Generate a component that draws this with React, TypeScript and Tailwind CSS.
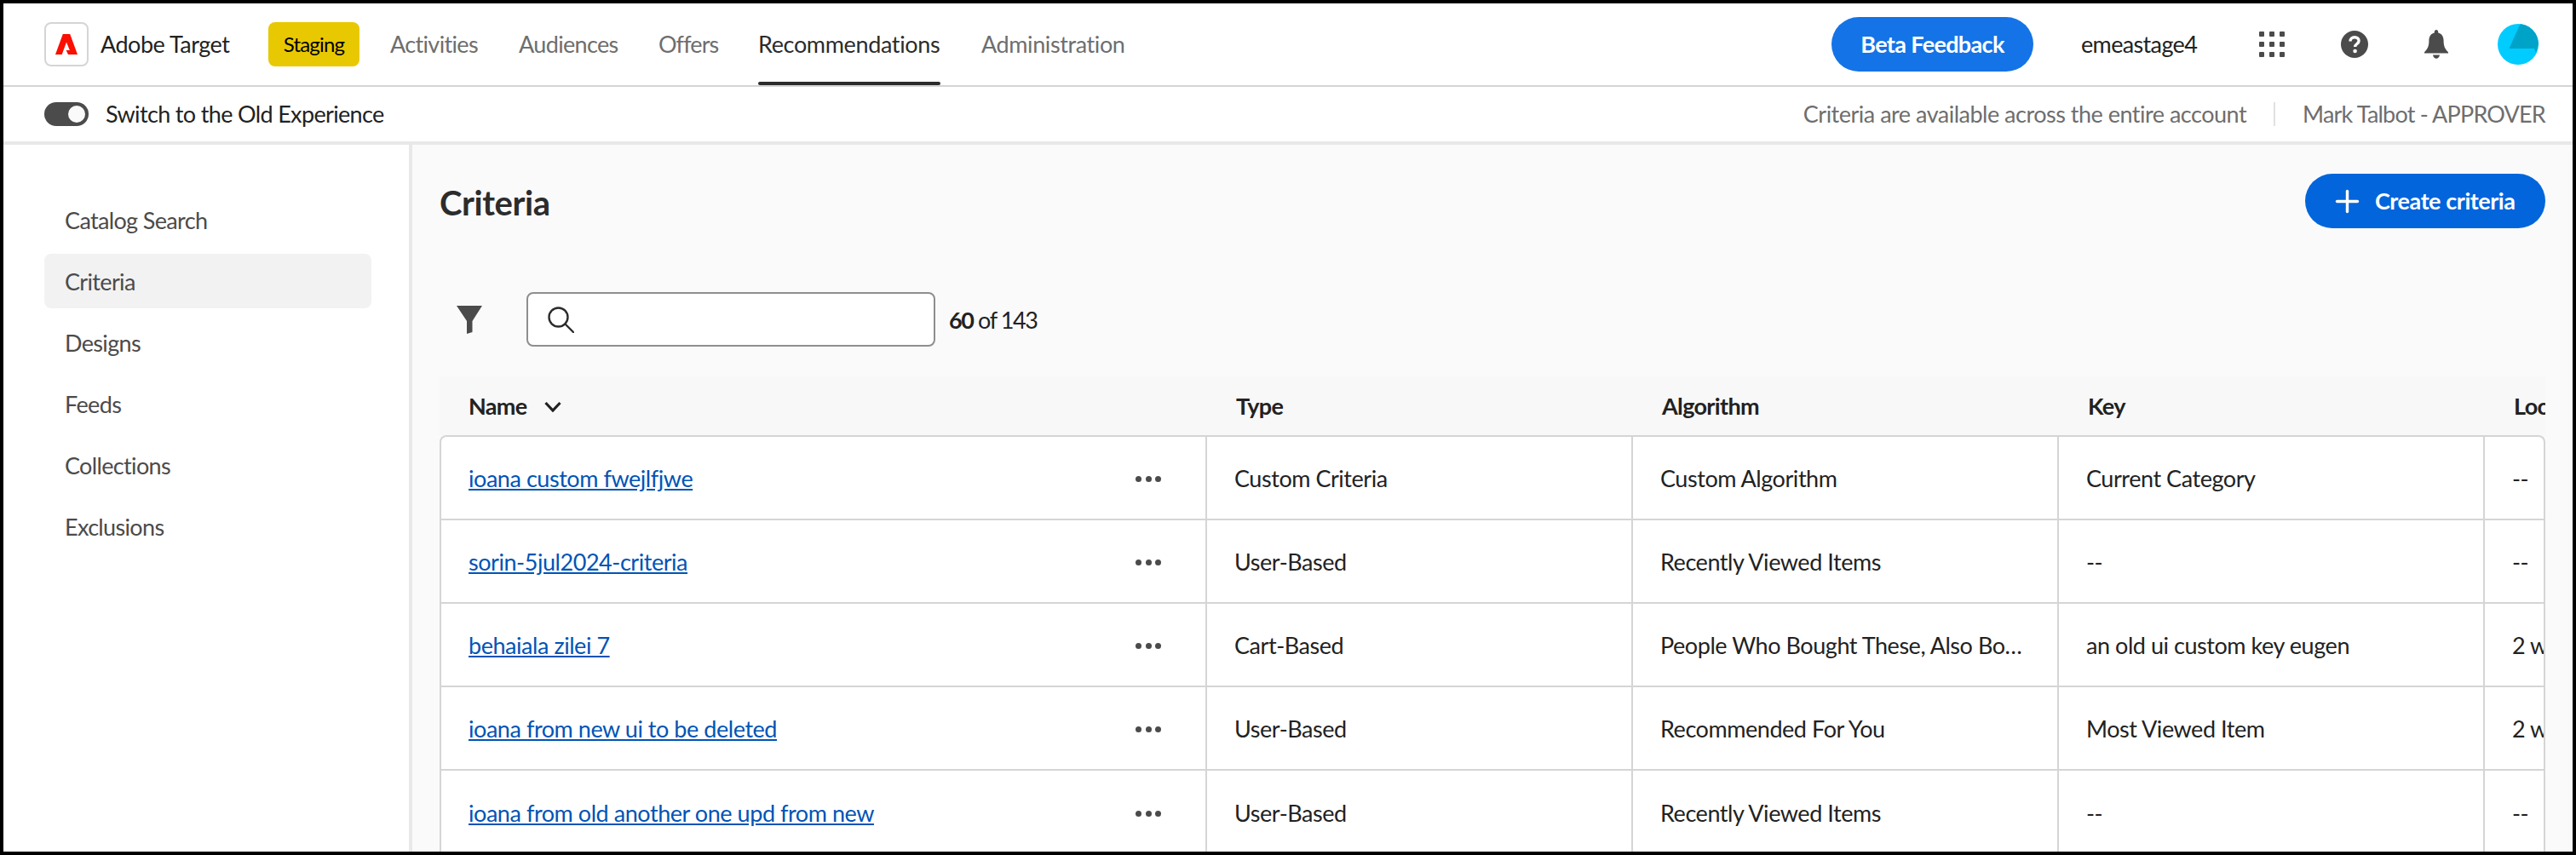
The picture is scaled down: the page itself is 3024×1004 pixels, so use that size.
import { Plus } from 'lucide-react'

const navItems = [
  { label: 'Activities', className: 'w-[103px]' },
  { label: 'Audiences', className: 'w-[116px]' },
  { label: 'Offers', className: 'w-[69px] tracking-[-0.9px]' },
  { label: 'Recommendations', className: 'w-[214px] tracking-[-0.35px]' },
  { label: 'Administration', className: 'w-[168px] tracking-[-0.4px]' },
]
const sideItems = ['Catalog Search', 'Criteria', 'Designs', 'Feeds', 'Collections', 'Exclusions']

const rows = [
  { name: 'ioana custom fwejlfjwe', type: 'Custom Criteria', algorithm: 'Custom Algorithm', key: 'Current Category', loc: '--' },
  { name: 'sorin-5jul2024-criteria', type: 'User-Based', algorithm: 'Recently Viewed Items', key: '--', loc: '--' },
  { name: 'behaiala zilei 7', type: 'Cart-Based', algorithm: 'People Who Bought These, Also Bought These', key: 'an old ui custom key eugen', loc: '2 weeks ago' },
  { name: 'ioana from new ui to be deleted', type: 'User-Based', algorithm: 'Recommended For You', key: 'Most Viewed Item', loc: '2 weeks ago' },
  { name: 'ioana from old another one upd from new', type: 'User-Based', algorithm: 'Recently Viewed Items', key: '--', loc: '--' },
]

function AdobeMark() {
  return (
    <svg viewBox="0 0 26 24" className="w-[26px] h-6" fill="#fa0f00">
      <path d="M8.8 0H17.2L26 24H15L12.6 19H16.8L13 9.5L7.7 24H0Z" />
    </svg>
  )
}

function GridIcon() {
  const dots = [0, 12, 24]
  return (
    <svg viewBox="0 0 30 30" className="w-[30px] h-[30px]" fill="#4b4b4b">
      {dots.map((y) => dots.map((x) => <rect key={`${x}-${y}`} x={x} y={y} width="6" height="6" rx="1" />))}
    </svg>
  )
}

function HelpIcon() {
  return (
    <svg viewBox="0 0 32 32" className="w-8 h-8">
      <circle cx="16" cy="16" r="16" fill="#4b4b4b" />
      <path d="M11 12.5c0-3 2.2-4.8 5.1-4.8 2.9 0 5 1.7 5 4.2 0 3.6-4.4 3.6-4.4 7" fill="none" stroke="#fff" strokeWidth="3.4" />
      <circle cx="16.6" cy="24" r="2.3" fill="#fff" />
    </svg>
  )
}

function BellIcon() {
  return (
    <svg viewBox="0 0 28 34" className="w-7 h-[34px]" fill="#4b4b4b">
      <path d="M14 0c1.3 0 2.2 1 2.2 2.4v1.2c4.2 1 6.4 4.4 6.4 9.2 0 5.6 1.2 9.6 5.4 13.4v1.4H0v-1.4c4.2-3.8 5.4-7.8 5.4-13.4 0-4.8 2.2-8.2 6.4-9.2V2.4C11.8 1 12.7 0 14 0z" />
      <path d="M10 29.5h8c-.4 2.6-2 4.3-4 4.3s-3.6-1.7-4-4.3z" />
    </svg>
  )
}

function Avatar() {
  return (
    <div className="w-12 h-12 rounded-full overflow-hidden bg-[#00ccff]">
      <svg viewBox="0 0 48 48" className="w-12 h-12" fill="#00a3c8">
        <path d="M26.5 0L13.5 29H43L45 34L48 24V0Z" />
      </svg>
    </div>
  )
}

function FilterIcon() {
  return (
    <svg viewBox="0 0 30 33" className="w-[30px] h-[33px]" fill="#4b4b4b">
      <path d="M0 0H30L18.5 18V31L12 33V18Z" />
    </svg>
  )
}

function SearchIcon() {
  return (
    <svg viewBox="0 0 31 31" className="w-[31px] h-[31px]" fill="none" stroke="#2c2c2c" strokeWidth="2.4">
      <circle cx="12.5" cy="12.5" r="11" />
      <path d="M20.5 20.5L30 30" strokeLinecap="round" />
    </svg>
  )
}

function MoreDots() {
  return (
    <div className="flex gap-[4.5px]">
      <span className="w-[7px] h-[7px] rounded-full bg-[#4b4b4b]" />
      <span className="w-[7px] h-[7px] rounded-full bg-[#4b4b4b]" />
      <span className="w-[7px] h-[7px] rounded-full bg-[#4b4b4b]" />
    </div>
  )
}

export default function App() {
  return (
    <div className="w-[3024px] h-[1004px] bg-black p-1 overflow-hidden font-[family-name:Lato,sans-serif] text-[27px] tracking-[-0.65px] text-[#222]">
      <div className="w-full h-full flex flex-col bg-white overflow-hidden">
        {/* top bar */}
        <header className="h-[98px] shrink-0 flex items-center border-b-2 border-[#d5d5d5] pl-12 pr-10">
          <div className="w-[52px] h-[52px] flex items-center justify-center rounded-lg border-2 border-[#d5d5d5]">
            <AdobeMark />
          </div>
          <span className="ml-[14px] w-[151px] whitespace-nowrap tracking-[-0.5px]">Adobe Target</span>
          <div className="ml-[46px] w-[107px] h-[52px] flex items-center justify-center rounded-lg bg-[#e8c800] text-black text-[24px] tracking-[-0.8px]">
            Staging
          </div>
          <nav className="ml-9 h-full flex gap-12">
            {navItems.map((item) => (
              <div
                key={item.label}
                className={`relative flex items-center whitespace-nowrap ${item.className} ${item.label === 'Recommendations' ? 'text-[#2c2c2c]' : 'text-[#6e6e6e]'}`}
              >
                {item.label}
                {item.label === 'Recommendations' && (
                  <span className="absolute left-0 right-0 bottom-0 h-1 rounded-sm bg-[#2c2c2c]" />
                )}
              </div>
            ))}
          </nav>
          <div className="ml-auto flex items-center">
            <button className="w-[237px] h-16 rounded-full bg-[#1473e6] text-white font-bold">Beta Feedback</button>
            <span className="ml-14 w-[137px]">emeastage4</span>
            <div className="ml-[72px]"><GridIcon /></div>
            <div className="ml-[66px]"><HelpIcon /></div>
            <div className="ml-[66px]"><BellIcon /></div>
            <div className="ml-[58px]"><Avatar /></div>
          </div>
        </header>

        {/* old experience bar */}
        <div className="h-[68px] shrink-0 flex items-center border-b-4 border-[#e8e8e8] pl-12 pr-8">
          <div className="w-[52px] h-7 rounded-full bg-[#4b4b4b] flex items-center justify-end pr-1">
            <span className="w-5 h-5 rounded-full bg-[#fafafa]" />
          </div>
          <span className="ml-5">Switch to the Old Experience</span>
          <span className="ml-auto text-[#6e6e6e] tracking-[-0.5px]">Criteria are available across the entire account</span>
          <span className="w-0.5 h-7 mx-8 bg-[#e1e1e1]" />
          <span className="text-[#6e6e6e] tracking-[-0.8px]">Mark Talbot - APPROVER</span>
        </div>

        <div className="flex-1 flex min-h-0">
          {/* sidebar */}
          <aside className="w-[480px] shrink-0 border-r-4 border-[#e8e8e8] pt-14 pl-12 pr-11">
            <div className="flex flex-col gap-2">
              {sideItems.map((item) => (
                <div
                  key={item}
                  className={`h-16 flex items-center px-6 pt-0.5 rounded-lg text-[#4b4b4b] ${item === 'Criteria' ? 'bg-[#f2f2f2]' : ''}`}
                >
                  {item}
                </div>
              ))}
            </div>
          </aside>

          {/* main */}
          <main className="flex-1 min-w-0 bg-[#fafafa] pt-[34px] pl-8 pr-8">
            <div className="h-16 flex items-center justify-between">
              <h1 className="pt-1 text-[40px] font-bold tracking-[-0.4px] text-[#2c2c2c]">Criteria</h1>
              <button className="w-[282px] h-16 flex items-center gap-3 pl-[29px] rounded-full bg-[#0265dc] text-white font-bold tracking-[-0.45px]">
                <Plus size={41} strokeWidth={2} />
                Create criteria
              </button>
            </div>

            <div className="mt-[75px] h-16 flex items-center">
              <div className="ml-5"><FilterIcon /></div>
              <div className="ml-[52px] w-[480px] h-16 flex items-center pl-[23px] bg-white rounded-lg border-2 border-[#8e8e8e]">
                <SearchIcon />
              </div>
              <span className="ml-4 pt-0.5 tracking-[-1.4px]"><b className="font-bold">60</b> of 143</span>
            </div>

            <div className="mt-[35px] h-[69px] pt-0.5 flex items-center font-bold bg-[#f8f8f8] overflow-hidden">
              <div className="w-[903px] shrink-0 pl-[34px] flex items-center gap-5">
                Name
                <svg viewBox="0 0 20 13" className="w-5 h-[13px]" fill="none" stroke="#222" strokeWidth="3.2">
                  <path d="M1.5 2L10 11L18.5 2" />
                </svg>
              </div>
              <div className="w-[500px] shrink-0 pl-8">Type</div>
              <div className="w-[500px] shrink-0 pl-8">Algorithm</div>
              <div className="w-[500px] shrink-0 pl-8">Key</div>
              <div className="flex-1 min-w-0 pl-8 whitespace-nowrap overflow-hidden">Location</div>
            </div>

            <div className="border-2 border-b-0 border-[#d5d5d5] rounded-t-lg bg-white overflow-hidden tracking-[-0.45px]">
              {rows.map((row) => (
                <div key={row.name} className="h-[98px] flex border-b-2 border-[#d5d5d5] last:border-b-0">
                  <div className="w-[899px] shrink-0 pl-8 pr-[52px] pt-0.5 flex items-center justify-between border-r-2 border-[#d5d5d5]">
                    <a className="text-[#0054b6] underline">{row.name}</a>
                    <MoreDots />
                  </div>
                  <div className="w-[500px] shrink-0 px-8 pt-0.5 flex items-center border-r-2 border-[#d5d5d5]">{row.type}</div>
                  <div className="w-[500px] shrink-0 px-8 pt-0.5 flex items-center border-r-2 border-[#d5d5d5]">
                    <span className="truncate">{row.algorithm}</span>
                  </div>
                  <div className="w-[500px] shrink-0 px-8 pt-0.5 flex items-center border-r-2 border-[#d5d5d5]">{row.key}</div>
                  <div className="flex-1 min-w-0 pl-8 pt-0.5 flex items-center whitespace-nowrap overflow-hidden">{row.loc}</div>
                </div>
              ))}
            </div>
          </main>
        </div>
      </div>
    </div>
  )
}
